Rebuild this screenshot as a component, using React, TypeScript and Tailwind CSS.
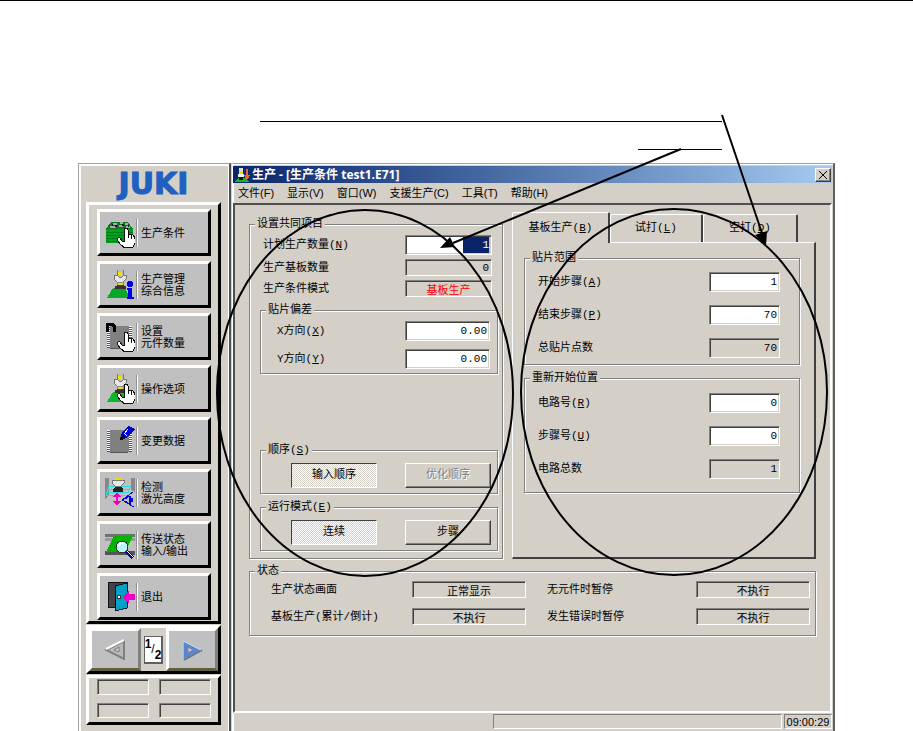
import type { ReactNode } from "react";

const SUNKEN =
  "border border-t-[#808080] border-l-[#808080] border-b-white border-r-white shadow-[inset_1px_1px_0_#404040,inset_-1px_-1px_0_#d4d0c8]";
const RAISED =
  "border border-t-white border-l-white border-b-[#404040] border-r-[#404040] shadow-[inset_-1px_-1px_0_#808080]";

function Hand() {
  return (
    <path
      d="M19 24 V12 Q19 10 21 10 Q23 10 23 12 V17 Q25 15 26 17 Q28 16 29 19 Q30 18 30 21 V25 L28 29 Q25 30 20 30 L16 27 L12 22 Q12 19 15 20 L17 23 H19 M23 17 V20 M26 17 V21"
      fill="#fff"
      stroke="#111"
      strokeWidth="1"
    />
  );
}

function Nozzle() {
  return (
    <g>
      <path d="M12 0h6v5h-6z" fill="#bbb" />
      <path d="M12 0v5M18 0v5" stroke="#777" />
      <path d="M13 2h4v4h-4z" fill="#f0e000" />
      <path d="M9 5h3l2 2h3l2-2h2v4l-3 3h-6l-3-3z" fill="#e8e8e8" stroke="#777" />
      <path d="M12 12h6v4h-6z" fill="#f0e000" stroke="#888" strokeWidth="1" />
      <path d="M10 16l3-1h4l4 1v3H10z" fill="#333" />
    </g>
  );
}

function Chip() {
  return (
    <g>
      <path d="M4 4h20v22H4z" fill="#808080" />
      <path d="M3 4v22M25 4v22" stroke="#fff" strokeWidth="3" strokeDasharray="1 1" />
      <path d="M3 5v22M25 5v22" stroke="#555" strokeWidth="3" strokeDasharray="1 1" />
      <path d="M5 26h18" stroke="#555" />
    </g>
  );
}

const ICONS: Record<string, ReactNode> = {
  board: (
    <g>
      <path d="M6 4h17l5 7H1z" fill="#0c7a1c" />
      <path d="M8 6h4M15 5h3M20 6h3M5 9h6M14 8h4M21 9h4" stroke="#aaa" strokeWidth="2" />
      <path d="M10 8h2M17 7h2M23 8h1M7 7h1" stroke="#111" strokeWidth="2" />
      <path d="M1 11h27v14H1z" fill="#00a020" />
      <path d="M1 14h27M1 17h27M1 20h27M1 23h27" stroke="#067818" strokeWidth="1" />
      <Hand />
    </g>
  ),
  info: (
    <g>
      <path d="M8 18h12l5 10H2z" fill="#0aa82a" />
      <Nozzle />
      <circle cx="25" cy="14" r="3" fill="#0000e0" />
      <path d="M22 18h5v9h2v2h-7v-2h1v-7h-1z" fill="#0000e0" />
    </g>
  ),
  parts: (
    <g>
      <Chip />
      <path d="M2 10V1M1 2h6l2 2v6" stroke="#000" strokeWidth="3" fill="none" />
      <Hand />
    </g>
  ),
  option: (
    <g>
      <path d="M8 18h12l5 10H2z" fill="#0ab82a" />
      <Nozzle />
      <Hand />
    </g>
  ),
  edit: (
    <g>
      <Chip />
      <path d="M15 14l2-8 7-6 6 3-9 9z" fill="#0000d0" />
      <path d="M19 7l3 3M23 3l-3 4" stroke="#fff" strokeWidth="1" />
      <path d="M15 14l1-5 4 4z" fill="#111" />
    </g>
  ),
  laser: (
    <g>
      <path d="M0 0h4v17l-4 5z" fill="#888" />
      <path d="M26 0h4v14l-4-2z" fill="#888" />
      <path d="M4 8h22M3 11h22M2 14h22M1 17h19" stroke="#30d8e0" strokeWidth="1" />
      <path d="M4 8l-3 9M26 8l-3 6" stroke="#30d8e0" />
      <path d="M10 0h6v3h-6z" fill="#f0e000" />
      <path d="M7 2h4l2 1 2-1h4v3l-3 3h-6L7 5z" fill="#e8e8e8" stroke="#777" />
      <path d="M10 9h6l2 2v3H8v-3z" fill="#222" />
      <path d="M12 14l4 5h-3v4h3l-4 5-4-5h3v-4H8z" fill="#f000c0" />
      <path d="M17 22l11-8M17 22l12 7M20 21l5-3q3 4 0 8l-5-3M24 19v6" fill="none" stroke="#0000e0" />
      <path d="M25 20h3v4h-3z" fill="#0000e0" />
    </g>
  ),
  conveyor: (
    <g>
      <path d="M0 4h30v3H0z" fill="#707070" />
      <path d="M0 8h30v3H0z" fill="#999" />
      <path d="M0 21h30v4H0z" fill="#555" />
      <path d="M9 6h19l-8 16H1z" fill="#00b400" />
      <path d="M21 21l7 7" stroke="#0000c0" strokeWidth="4" />
      <path d="M22 21l6 6" stroke="#fff" strokeWidth="1" />
      <circle cx="17" cy="17" r="6" fill="#b8f4fa" stroke="#333" />
      <path d="M14 16q1-3 4-3" stroke="#fff" strokeWidth="2" fill="none" />
    </g>
  ),
  exit: (
    <g>
      <path d="M3 0h18v25H3z" fill="#444" stroke="#111" />
      <path d="M10 4l12-3v25l-12 3z" fill="#00a0c8" stroke="#111" />
      <circle cx="14" cy="15" r="2" fill="#fff" stroke="#333" />
      <path d="M17 15l7-7v4h6v6h-6v4z" fill="#f000c0" />
    </g>
  ),
};

const SIDE_ITEMS = [
  { icon: "board", lines: ["生产条件"] },
  { icon: "info", lines: ["生产管理", "综合信息"] },
  { icon: "parts", lines: ["设置", "元件数量"] },
  { icon: "option", lines: ["操作选项"] },
  { icon: "edit", lines: ["变更数据"] },
  { icon: "laser", lines: ["检测", "激光高度"] },
  { icon: "conveyor", lines: ["传送状态", "输入/输出"] },
  { icon: "exit", lines: ["退出"] },
];

const MENU = ["文件(F)", "显示(V)", "窗口(W)", "支援生产(C)", "工具(T)", "帮助(H)"];

function Sidebar() {
  return (
    <aside className="w-[153px] shrink-0 flex flex-col border-l border-t border-[#a0a0a0] border-r-2 border-r-[#505050] shadow-[inset_2px_2px_0_#fff,inset_-1px_0_0_#fff] pl-[7px] pr-2">
      <div className="h-[38px] pt-0.5 flex items-center justify-center font-['DejaVu_Sans',sans-serif] text-[30px] leading-[30px] font-bold text-[#2060c0] [-webkit-text-stroke:1px_#2060c0]">
        JUKI
      </div>
      <nav className="border-3 border-t-white border-l-white border-b-black border-r-black pt-1 pb-px pl-2 pr-[7px] flex flex-col gap-[5px]">
        {SIDE_ITEMS.map((item) => (
          <button
            key={item.icon}
            type="button"
            className="h-[47px] bg-[#c0c0c0] border-3 border-t-white border-l-white border-b-black border-r-black flex items-center pl-[5px] text-left"
          >
            <svg viewBox="0 0 30 30" className="size-[30px] shrink-0" shapeRendering="crispEdges" aria-hidden="true">
              {ICONS[item.icon]}
            </svg>
            <span className="ml-px mr-[3px] w-0.5 h-7 border-l border-l-[#909090] border-r border-r-white" />
            <span className="leading-3 whitespace-nowrap font-['Liberation_Sans','Noto_Sans_CJK_SC',sans-serif]">
              {item.lines.map((line) => (
                <span key={line} className="block">{line}</span>
              ))}
            </span>
          </button>
        ))}
      </nav>
      <div className="mt-px h-[49px] border-3 border-t-white border-l-white border-b-black border-r-black flex items-center justify-between">
        <button
          type="button"
          aria-label="上一页"
          className="w-[52px] h-[43px] bg-[#c0c0c0] border-3 border-t-white border-l-white border-b-[#606040] border-r-[#808080] flex items-center justify-center"
        >
          <svg viewBox="0 0 22 22" className="size-[22px]" aria-hidden="true">
            <path d="M20 2v18L2 11z" fill="#b8b8b8" stroke="#808080" strokeWidth="2" />
            <path d="M2 10L20 1" stroke="#fff" strokeWidth="2" />
            <path d="M15 8v5l-5-2z" fill="#ccc" stroke="#808080" />
          </svg>
        </button>
        <span className="w-[19px] h-7 bg-white border border-[#606060] border-b-2 border-r-2 flex justify-center font-['Liberation_Sans',sans-serif] text-[12px] leading-[14px] font-bold">
          <span className="self-start">1</span>
          <span className="self-center font-normal">/</span>
          <span className="self-end">2</span>
        </span>
        <button
          type="button"
          aria-label="下一页"
          className="w-[52px] h-[43px] bg-[#c0c0c0] border-3 border-t-white border-l-white border-b-[#606040] border-r-[#808080] flex items-center justify-center"
        >
          <svg viewBox="0 0 22 22" className="size-[22px]" aria-hidden="true">
            <path d="M3 21L21 11" stroke="#707070" strokeWidth="2" />
            <path d="M2 2v18l18-9z" fill="#5c84cc" stroke="#5c84cc" strokeWidth="1" />
            <path d="M2 20V2l18 9" stroke="#e0f0e0" fill="none" />
            <path d="M7 8v6l5-3z" fill="#c8c8c8" stroke="#8080a8" />
          </svg>
        </button>
      </div>
      <div className="mt-px h-[50px] border-3 border-t-white border-l-white border-b-black border-r-black grid grid-cols-2 gap-x-[10px] gap-y-2 pt-px pb-1 pl-2 pr-[7px]">
        <div className={SUNKEN} />
        <div className={SUNKEN} />
        <div className={SUNKEN} />
        <div className={SUNKEN} />
      </div>
    </aside>
  );
}

interface GroupProps {
  title: string;
  hotkey?: string;
  className?: string;
  body: string;
  children: ReactNode;
}

function Group({ title, hotkey, className = "", body, children }: GroupProps) {
  return (
    <fieldset className={"min-w-0 border border-[#808080] shadow-[inset_1px_1px_0_#fff,1px_1px_0_#fff] " + className}>
      <legend className="ml-[5px] px-0.5 leading-[14px] bg-[#d4d0c8]">
        {title}
        <Hotkey letter={hotkey} />
      </legend>
      <div className={body}>{children}</div>
    </fieldset>
  );
}

function Hotkey({ letter }: { letter?: string }) {
  if (!letter) return null;
  return (
    <>
      (<u>{letter}</u>)
    </>
  );
}

interface FieldProps {
  id: string;
  label: string;
  hotkey?: string;
  value: string;
  size: string;
  look?: string;
  readOnly?: boolean;
}

function Field({ id, label, hotkey, value, size, look = "text-right bg-white", readOnly }: FieldProps) {
  return (
    <div className="flex items-center justify-between">
      <label htmlFor={id} className="leading-[14px] whitespace-nowrap">
        {label}
        <Hotkey letter={hotkey} />
      </label>
      <input id={id} defaultValue={value} readOnly={readOnly} className={`${SUNKEN} ${size} ${look} shrink-0 px-0.5 outline-none`} />
    </div>
  );
}

const PRESSED =
  "border border-t-[#404040] border-l-[#404040] border-b-white border-r-white bg-[repeating-conic-gradient(#fff_0_25%,#d4d0c8_0_50%)] bg-[length:2px_2px]";

function Choice({ children, look }: { children: ReactNode; look: string }) {
  return (
    <button type="button" className={"w-[86px] h-[25px] " + look}>
      {children}
    </button>
  );
}

function CommonSettings() {
  return (
    <Group title="设置共同项目" className="mt-[5px]" body="pl-[10px] pr-1 pb-[7px]">
      <div className="pt-1 pl-[3px] pr-1.5 flex flex-col gap-1">
        <Field
          id="plan"
          label="计划生产数量"
          hotkey="N"
          value="1"
          size="w-[87px] h-5"
          look="text-right text-white bg-[linear-gradient(to_left,#fff_1px,#e0c060_1px,#e0c060_2px,#0a246a_2px,#0a246a_28px,#fff_28px)]"
        />
        <Field id="done" label="生产基板数量" value="0" size="w-[87px] h-[17px]" look="text-right bg-[#d4d0c8]" readOnly />
        <Field id="mode" label="生产条件模式" value="基板生产" size="w-[87px] h-[17px]" look="text-center text-[#ff0000] bg-[#d4d0c8]" readOnly />
      </div>
      <Group title="贴片偏差" className="mt-1.5" body="pl-4 pr-[7px] py-1 flex flex-col gap-2">
        <Field id="dx" label="X方向" hotkey="X" value="0.00" size="w-[85px] h-5" />
        <Field id="dy" label="Y方向" hotkey="Y" value="0.00" size="w-[85px] h-5" />
      </Group>
      <Group title="顺序" hotkey="S" className="mt-[69px]" body="pl-[30px] pr-1.5 pt-1.5 pb-[5px] flex justify-between">
        <Choice look={PRESSED}>输入顺序</Choice>
        <Choice look={RAISED + " text-[#808080] [text-shadow:1px_1px_0_#fff]"}>优化顺序</Choice>
      </Group>
      <Group title="运行模式" hotkey="E" className="mt-1.5" body="pl-[30px] pr-1.5 pt-1.5 pb-[5px] flex justify-between">
        <Choice look={PRESSED}>连续</Choice>
        <Choice look={RAISED}>步骤</Choice>
      </Group>
    </Group>
  );
}

const TAB = "border-t border-l border-t-white border-l-white border-r-2 border-r-[#404040] rounded-t-[2px] bg-[#d4d0c8]";

function BoardTabs() {
  return (
    <section className="flex flex-col">
      <div className="grid grid-cols-[98fr_93fr_95fr] items-end pr-[18px]" role="tablist">
        <button type="button" role="tab" aria-selected="true" className={TAB + " relative h-[31px] -mb-px"}>
          基板生产<Hotkey letter="B" />
        </button>
        <button type="button" role="tab" aria-selected="false" className={TAB + " h-7"}>
          试打<Hotkey letter="L" />
        </button>
        <button type="button" role="tab" aria-selected="false" className={TAB + " h-7"}>
          空打<Hotkey letter="D" />
        </button>
      </div>
      <div className="flex-1 border-t border-l border-t-white border-l-white border-b-2 border-b-[#404040] border-r-2 border-r-[#404040] pt-2 pl-[11px] pr-[14px]">
        <Group title="贴片范围" body="pl-[13px] pr-[19px] pt-[7px] pb-1.5 flex flex-col gap-[13px]">
          <Field id="from" label="开始步骤" hotkey="A" value="1" size="w-[71px] h-5" />
          <Field id="to" label="结束步骤" hotkey="P" value="70" size="w-[71px] h-5" />
          <Field id="points" label="总贴片点数" value="70" size="w-[71px] h-5" look="text-right bg-[#d4d0c8]" readOnly />
        </Group>
        <Group title="重新开始位置" className="mt-1.5" body="pl-[13px] pr-[19px] pt-2 pb-[13px] flex flex-col gap-[13px]">
          <Field id="circuit" label="电路号" hotkey="R" value="0" size="w-[71px] h-5" />
          <Field id="step" label="步骤号" hotkey="U" value="0" size="w-[71px] h-5" />
          <Field id="circuits" label="电路总数" value="1" size="w-[71px] h-5" look="text-right bg-[#d4d0c8]" readOnly />
        </Group>
      </div>
    </section>
  );
}

function StatusGroup() {
  const look = "text-center bg-[#d4d0c8]";
  const size = "w-[114px] h-[17px]";
  return (
    <Group
      title="状态"
      className="mt-[5px]"
      body="pl-[21px] pr-[5px] pt-[3px] pb-[10px] grid grid-cols-[255fr_263fr] gap-x-[21px] gap-y-[10px]"
    >
      <Field id="screen" label="生产状态画面" value="正常显示" size={size} look={look} readOnly />
      <Field id="nopart" label="无元件时暂停" value="不执行" size={size} look={look} readOnly />
      <Field id="count" label="基板生产(累计/倒计)" value="不执行" size={size} look={look} readOnly />
      <Field id="onerror" label="发生错误时暂停" value="不执行" size={size} look={look} readOnly />
    </Group>
  );
}

function MainWindow() {
  return (
    <main className="flex-1 min-w-0 flex flex-col border-t border-l border-r-2 border-t-[#a0a0a0] border-l-white border-r-[#606060] shadow-[inset_1px_1px_0_#fff] pt-0.5 pr-px">
      <header className="h-[17px] flex items-center bg-linear-to-r from-[#0a246a] to-[#a6caf0] pl-px pr-px text-white">
        <svg viewBox="0 0 16 16" className="size-4 mr-0.5" shapeRendering="crispEdges" aria-hidden="true">
          <path d="M0 15l4-4h7l4 4z" fill="#0ab82a" />
          <path d="M5 1h4v3H5z" fill="#ddd" />
          <path d="M5 4h4v3H5z" fill="#f0e000" />
          <path d="M4 7h6v3H4z" fill="#eee" />
          <path d="M5 10h4v3H5z" fill="#111" />
          <path d="M13 2v8M11 8l2 3 2-3" stroke="#f06030" strokeWidth="2" fill="none" />
        </svg>
        <h1 className="flex-1 text-[12px] leading-4 font-bold whitespace-nowrap font-['Open_Sans','Noto_Sans_CJK_SC',sans-serif]">
          生产 - [生产条件 test1.E71]
        </h1>
        <button type="button" aria-label="关闭" className={RAISED + " w-4 h-[14px] bg-[#d4d0c8] flex items-center justify-center"}>
          <svg viewBox="0 0 8 8" className="size-2" aria-hidden="true">
            <path d="M0 0l8 8M8 0L0 8" stroke="#000" strokeWidth="1" />
          </svg>
        </button>
      </header>
      <nav className="h-5 flex items-center gap-[13px] pl-[5px] font-['Liberation_Sans','Noto_Sans_CJK_SC',sans-serif]">
        {MENU.map((item) => (
          <button key={item} type="button" className="whitespace-nowrap leading-[14px]">
            {item}
          </button>
        ))}
      </nav>
      <div className="flex-1 border-2 border-t-[#505050] border-l-[#505050] border-b-white border-r-white pt-[7px] pl-[14px] pr-[14px]">
        <div className="grid grid-cols-[254fr_304fr] gap-[9px]">
          <CommonSettings />
          <BoardTabs />
        </div>
        <StatusGroup />
      </div>
      <footer className="h-[18px] flex gap-0.5 pb-0.5 pt-px font-['Liberation_Sans',sans-serif]">
        <div className="flex-[260]" />
        <div className="flex-[289] border border-t-[#808080] border-l-[#808080] border-b-white border-r-white" />
        <div className="w-12 border border-t-[#808080] border-l-[#808080] border-b-white border-r-white text-center leading-[14px]">
          09:00:29
        </div>
      </footer>
    </main>
  );
}

// leader lines, arrows and circles drawn over the window
function Callouts() {
  return (
    <svg width="913" height="731" viewBox="0 1 913 731" className="absolute left-0 top-0 pointer-events-none" fill="none" stroke="#000" aria-hidden="true">
      <path d="M260 121H722M638 149H722" strokeWidth="1" shapeRendering="crispEdges" />
      <path d="M722 115L762 233M681 149L453 243" strokeWidth="2" />
      <path d="M766 246l-11-11 12-4zM440 248l10-11 5 10z" fill="#000" stroke="none" />
      <ellipse cx="365" cy="393" rx="148" ry="183" strokeWidth="2" />
      <ellipse cx="674" cy="392" rx="153" ry="183" strokeWidth="2" />
    </svg>
  );
}

export default function App() {
  return (
    <div className="relative min-h-screen flex flex-col bg-white border-t border-black pt-[162px] px-[78px] text-[11px] text-black font-['Liberation_Mono','Noto_Sans_CJK_SC',monospace]">
      <div className="flex-1 flex gap-px bg-[#d4d0c8]">
        <Sidebar />
        <MainWindow />
      </div>
      <Callouts />
    </div>
  );
}
